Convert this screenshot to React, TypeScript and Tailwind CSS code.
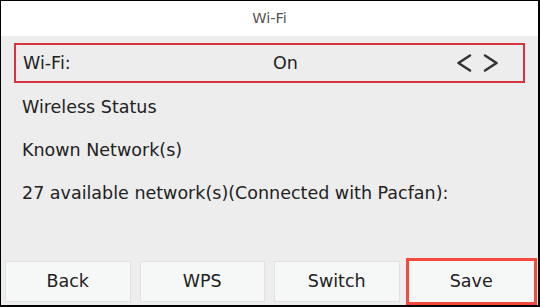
const items = [
  "Wireless Status",
  "Known Network(s)",
  "27 available network(s)(Connected with Pacfan):",
];

const buttons = ["Back", "WPS", "Switch", "Save"];

const Chevron = ({ dir }: { dir: "left" | "right" }) => (
  <svg width="16" height="20" viewBox="0 0 16 20" fill="none" stroke="#333" strokeWidth="2.6" strokeLinecap="round" strokeLinejoin="round">
    {dir === "left" ? <polyline points="14,2.5 2.5,10 14,17.5" /> : <polyline points="2,2.5 13.5,10 2,17.5" />}
  </svg>
);

export default function App() {
  return (
    <div className="flex h-[307px] w-[540px] flex-col overflow-hidden border-t border-l border-r-2 border-b-2 border-black bg-[#ededed] font-['DejaVu_Sans',sans-serif] text-[#222]">
      <div className="flex h-[35px] shrink-0 items-center justify-center bg-white text-[14.5px] text-[#555]">
        Wi-Fi
      </div>
      <div className="flex flex-1 flex-col px-[13px] pt-[7px]">
        <div className="relative flex h-[40px] items-center border-2 border-[#d4353f] px-[7px] text-[17.5px]">
          <span>Wi-Fi:</span>
          <span className="absolute left-[257px]">On</span>
          <div className="ml-auto mr-[17px] flex items-center gap-[11px]">
            <Chevron dir="left" />
            <Chevron dir="right" />
          </div>
        </div>
        <div className="mt-[3px] flex flex-col">
          {items.map((t) => (
            <div key={t} className="flex h-[43px] items-center px-[8px] text-[17.5px]">
              {t}
            </div>
          ))}
        </div>
      </div>
      <div className="grid shrink-0 grid-cols-4 gap-[9px] pb-[3px] pl-[4px] pr-[4px]">
        {buttons.map((b) => (
          <div
            key={b}
            className={
              b === "Save"
                ? "flex h-[41px] items-center justify-center bg-[#f6f7f7] text-[17.5px] ring-[3px] ring-[#f24a3d]"
                : "flex h-[41px] items-center justify-center border border-[#e2e2e2] bg-[#f6f7f7] text-[17.5px]"
            }
          >
            {b}
          </div>
        ))}
      </div>
    </div>
  );
}
